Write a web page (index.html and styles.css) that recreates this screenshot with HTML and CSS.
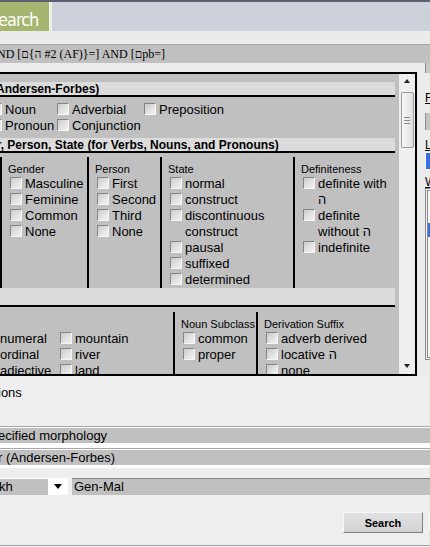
FILE: index.html
```html
<!DOCTYPE html>
<html>
<head>
<meta charset="utf-8">
<link rel="stylesheet" href="styles.css">
</head>
<body>
<div class="page">
  <div class="topline"></div>
  <div class="tabbar">
    <div class="tab"><span class="tab-text">earch</span></div>
  </div>
  <div class="band"></div>
  <div class="query">ND [ם{ה #2 (AF)}=] AND [םpb=]</div>

  <div class="work">
    <div class="panel">
      <div class="scroll">
        <div class="content">
          <div class="pad-top"></div>
          <div class="hdr h1"><span class="hdr-text">Andersen-Forbes)</span></div>
          <div class="pos">
            <div class="item"><span class="cb"></span><span class="lbl">Noun</span></div>
            <div class="item"><span class="cb"></span><span class="lbl">Adverbial</span></div>
            <div class="item"><span class="cb"></span><span class="lbl">Preposition</span></div>
            <div class="item"><span class="cb"></span><span class="lbl">Pronoun</span></div>
            <div class="item"><span class="cb"></span><span class="lbl">Conjunction</span></div>
          </div>
          <div class="hdr h2"><span class="hdr-text">er, Person, State (for Verbs, Nouns, and Pronouns)</span></div>
          <div class="grid g1">
            <div class="col w-gender">
              <div class="col-label">Gender</div>
              <div class="items">
                <div class="item"><span class="cb"></span><span class="lbl">Masculine</span></div>
                <div class="item"><span class="cb"></span><span class="lbl">Feminine</span></div>
                <div class="item"><span class="cb"></span><span class="lbl">Common</span></div>
                <div class="item"><span class="cb"></span><span class="lbl">None</span></div>
              </div>
            </div>
            <div class="col w-person">
              <div class="col-label">Person</div>
              <div class="items">
                <div class="item"><span class="cb"></span><span class="lbl">First</span></div>
                <div class="item"><span class="cb"></span><span class="lbl">Second</span></div>
                <div class="item"><span class="cb"></span><span class="lbl">Third</span></div>
                <div class="item"><span class="cb"></span><span class="lbl">None</span></div>
              </div>
            </div>
            <div class="col w-state">
              <div class="col-label">State</div>
              <div class="items">
                <div class="item"><span class="cb"></span><span class="lbl">normal</span></div>
                <div class="item"><span class="cb"></span><span class="lbl">construct</span></div>
                <div class="item"><span class="cb"></span><span class="lbl">discontinuous construct</span></div>
                <div class="item"><span class="cb"></span><span class="lbl">pausal</span></div>
                <div class="item"><span class="cb"></span><span class="lbl">suffixed</span></div>
                <div class="item"><span class="cb"></span><span class="lbl">determined</span></div>
              </div>
            </div>
            <div class="col w-def">
              <div class="col-label">Definiteness</div>
              <div class="items">
                <div class="item"><span class="cb"></span><span class="lbl">definite with ה</span></div>
                <div class="item"><span class="cb"></span><span class="lbl">definite without ה</span></div>
                <div class="item"><span class="cb"></span><span class="lbl">indefinite</span></div>
              </div>
            </div>
          </div>
          <div class="hdr h3"></div>
          <div class="grid g2">
            <div class="col c0">
              <div class="col-label"></div>
              <div class="subcols">
                <div class="items sa">
                  <div class="item"><span class="cb"></span><span class="lbl">numeral</span></div>
                  <div class="item"><span class="cb"></span><span class="lbl">ordinal</span></div>
                  <div class="item"><span class="cb"></span><span class="lbl">adjective</span></div>
                </div>
                <div class="items sb">
                  <div class="item"><span class="cb"></span><span class="lbl">mountain</span></div>
                  <div class="item"><span class="cb"></span><span class="lbl">river</span></div>
                  <div class="item"><span class="cb"></span><span class="lbl">land</span></div>
                </div>
              </div>
            </div>
            <div class="col w-noun">
              <div class="col-label">Noun Subclass</div>
              <div class="items">
                <div class="item"><span class="cb"></span><span class="lbl">common</span></div>
                <div class="item"><span class="cb"></span><span class="lbl">proper</span></div>
              </div>
            </div>
            <div class="col w-deriv">
              <div class="col-label">Derivation Suffix</div>
              <div class="items">
                <div class="item"><span class="cb"></span><span class="lbl">adverb derived</span></div>
                <div class="item"><span class="cb"></span><span class="lbl">locative ה</span></div>
                <div class="item"><span class="cb"></span><span class="lbl">none</span></div>
              </div>
            </div>
          </div>
        </div>
      </div>
      <div class="vscroll">
        <div class="sb-btn"><span class="arr-up"></span></div>
        <div class="thumb"><span class="grip"></span><span class="grip"></span><span class="grip"></span></div>
        <div class="sb-fill"></div>
        <div class="sb-btn"><span class="arr-down"></span></div>
      </div>
    </div>

    <div class="side">
      <div class="s-box1"></div>
      <div class="s-label s-f">F</div>
      <div class="s-box2"></div>
      <div class="s-label s-l">L</div>
      <div class="s-blue"></div>
      <div class="s-label s-w">W</div>
      <div class="s-list"><div class="s-sel"></div></div>
    </div>
  </div>

  <div class="lower">
    <div class="opts">ions</div>
    <div class="fold f1"><div class="fold-head">ecified morphology</div></div>
    <div class="fold f2"><div class="fold-head">r (Andersen-Forbes)</div></div>
    <div class="selrow">
      <div class="select"><span class="sel-val">kh</span><span class="sel-btn"><span class="arr-sel"></span></span></div>
      <div class="field">Gen-Mal</div>
    </div>
    <div class="btnrow">
      <button class="btn">Search</button>
      <button class="btn">Reset</button>
    </div>
    <div class="bottomline"></div>
  </div>
</div>
</body>
</html>
```
FILE: styles.css
```css
html, body {
  margin: 0;
  padding: 0;
}
body {
  background: #eeeeee;
  font-family: "Liberation Sans", Arial, sans-serif;
  color: #000;
}
.page {
  width: 430px;
  height: 547px;
  overflow: hidden;
}

/* top */
.topline {
  height: 2px;
  background: #5b6170;
}
.tabbar {
  height: 29px;
  background: #cdd1da;
  display: flex;
}
.tab {
  width: 49px;
  height: 26px;
  padding-top: 3px;
  background: #a6b56f;
  border-right: 3px solid #eef0ea;
  overflow: hidden;
  white-space: nowrap;
}
.tab-text {
  display: block;
  margin-left: -2px;
  color: #ffffff;
  font-family: "Liberation Sans Narrow", "Arial Narrow", "DejaVu Sans Condensed", sans-serif;
  font-stretch: condensed;
  font-size: 18px;
  letter-spacing: -1px;
  line-height: 29px;
}
.band {
  height: 13px;
  background: #ebebeb;
  border-bottom: 1px solid #a9a9a9;
}
.query {
  height: 18px;
  background: #c0c0c0;
  font-family: "Liberation Serif", "Times New Roman", serif;
  font-size: 12px;
  line-height: 18px;
  white-space: nowrap;
  text-indent: -3px;
  unicode-bidi: bidi-override;
  direction: ltr;
  overflow: hidden;
}

/* work area */
.work {
  display: flex;
  align-items: flex-start;
  background: #ececec;
}
.panel {
  margin-top: 9px;
  width: 415px;
  height: 300px;
  border: 2px solid #000;
  border-left: none;
  display: flex;
  flex: none;
}
.scroll {
  width: 399px;
  height: 300px;
  background: #c0c0c0;
  overflow: hidden;
  flex: none;
}
.content {
  width: 395px;
}
.pad-top {
  height: 8px;
}
.hdr {
  height: 13px;
  background: #dcdcdc;
  border-bottom: 2px solid #000;
  white-space: nowrap;
  overflow: hidden;
}
.hdr-text {
  display: block;
  font-weight: bold;
  font-size: 12px;
  line-height: 15px;
}
.h1 .hdr-text {
  margin-left: -4px;
}
.h2 .hdr-text {
  margin-left: -10px;
  line-height: 14px;
}
.h3 {
  height: 17px;
}

.item {
  display: flex;
  align-items: flex-start;
  font-size: 13px;
  line-height: 16px;
}
.cb {
  flex: none;
  width: 12px;
  height: 12px;
  box-sizing: border-box;
  margin: 1px 3px 0 0;
  border: 1px solid;
  border-color: #858585 #f6f6f6 #f6f6f6 #858585;
  background: linear-gradient(135deg, #cacaca 0%, #e4e4e4 60%, #f2f2f2 100%);
}
.lbl {
  white-space: normal;
}

.pos {
  display: grid;
  grid-template-columns: 67px 87px auto;
  grid-auto-rows: 16px;
  margin-left: -10px;
  padding: 5px 0 4px;
}
.pos .item {
  white-space: nowrap;
}

.grid {
  display: flex;
}
.g1 {
  padding-top: 4px;
  height: 131px;
}
.g2 {
  padding-top: 5px;
  height: 80px;
}
.col {
  flex: none;
  box-sizing: border-box;
  border-left: 2px solid #000;
  padding: 5px 0 0 6px;
}
.col-label {
  height: 14px;
  font-size: 11px;
  line-height: 14px;
  white-space: nowrap;
}
.items {
  padding-left: 2px;
}
.w-gender { width: 87px; }
.w-person { width: 73px; }
.w-state  { width: 133px; }
.w-def    { width: 102px; }

.c0 {
  width: 188px;
  margin-left: -15px;
  border-left: none;
  padding-left: 0;
}
.subcols {
  display: flex;
}
.c0 .items {
  padding-left: 0;
}
.sa { width: 75px; }
.w-noun { width: 83px; }
.w-deriv { width: 139px; }

/* scrollbar */
.vscroll {
  width: 16px;
  flex: none;
  background: #efefef;
  display: flex;
  flex-direction: column;
  align-items: center;
}
.sb-btn {
  height: 16px;
  width: 16px;
  display: flex;
  align-items: center;
  justify-content: center;
  flex: none;
}
.arr-up {
  width: 0;
  height: 0;
  border-left: 3px solid transparent;
  border-right: 3px solid transparent;
  border-bottom: 4px solid #222;
  margin-top: -3px;
}
.arr-down {
  width: 0;
  height: 0;
  border-left: 3px solid transparent;
  border-right: 3px solid transparent;
  border-top: 4px solid #222;
}
.thumb {
  margin-top: 2px;
  width: 13px;
  height: 56px;
  box-sizing: border-box;
  border: 1px solid #9c9c9c;
  border-radius: 2px;
  background: linear-gradient(to right, #f8f8f8, #dedede);
  display: flex;
  flex-direction: column;
  align-items: center;
  justify-content: center;
  gap: 2px;
  flex: none;
}
.grip {
  display: block;
  width: 6px;
  height: 1px;
  background: #8a8a8a;
}
.sb-fill {
  flex: 1;
}

/* side column */
.side {
  flex: 1;
  padding-left: 8px;
  display: flex;
  flex-direction: column;
  font-size: 12px;
}
.s-box1 {
  height: 10px;
  flex: none;
  background: #c8c8c8;
  border-left: 1px solid #8c8c8c;
}
.s-label {
  height: 13px;
  flex: none;
  line-height: 14px;
  text-decoration: underline;
  white-space: nowrap;
  overflow: hidden;
}
.s-f { margin-top: 18px; }
.s-box2 {
  margin-top: 9px;
  height: 17px;
  flex: none;
  background: #c4c4c4;
  border-left: 1px solid #8c8c8c;
}
.s-l { margin-top: 8px; }
.s-blue {
  margin-top: 1px;
  height: 16px;
  flex: none;
  border: 1px solid #f4f4f4;
  background: #3a6fe0;
}
.s-w { margin-top: 5px; }
.s-list {
  height: 134px;
  flex: none;
  border: 3px double #8a8a8a;
  background: #f4f4f4;
  padding-top: 32px;
}
.s-sel {
  height: 14px;
  background: #3a6fe0;
}

/* lower area */
.lower {
  display: flex;
  flex-direction: column;
}
.opts {
  margin-top: 9px;
  height: 16px;
  font-size: 13px;
  line-height: 16px;
  text-indent: -2px;
}
.fold {
  border-top: 1px solid #a6a6a6;
  background: #ffffff;
  padding-top: 1px;
}
.f1 {
  margin-top: 25px;
  padding-bottom: 5px;
}
.f2 {
  padding-bottom: 3px;
}
.fold-head {
  height: 15px;
  background: #c0c0c0;
  font-size: 13px;
  line-height: 15px;
  white-space: nowrap;
  text-indent: -2px;
}
.selrow {
  margin-top: 10px;
  height: 17px;
  display: flex;
}
.select {
  width: 68px;
  display: flex;
  background: #ffffff;
  flex: none;
}
.sel-val {
  width: 48px;
  margin-top: 1px;
  height: 16px;
  background: #c0c0c0;
  font-size: 13px;
  line-height: 16px;
  text-indent: -1px;
}
.sel-btn {
  flex: 1;
  display: flex;
  align-items: center;
  justify-content: center;
}
.arr-sel {
  width: 0;
  height: 0;
  border-left: 4px solid transparent;
  border-right: 4px solid transparent;
  border-top: 5px solid #000;
}
.field {
  margin-left: 4px;
  flex: 1;
  box-sizing: border-box;
  border-top: 1px solid #858585;
  background: #c0c0c0;
  font-size: 13px;
  line-height: 16px;
  padding-left: 2px;
}
.btnrow {
  margin-top: 17px;
  display: flex;
  gap: 6px;
  padding-left: 343px;
}
.btn {
  flex: none;
  width: 80px;
  height: 21px;
  margin: 0;
  padding: 0;
  box-sizing: border-box;
  border: 1px solid;
  border-color: #f8f8f8 #7e7e7e #7e7e7e #f8f8f8;
  background: linear-gradient(#e2e2e2, #d2d2d2);
  font-family: "Liberation Sans", Arial, sans-serif;
  font-weight: bold;
  font-size: 11px;
  color: #000;
}
.bottomline {
  margin-top: 12px;
  height: 1px;
  background: #a4a4a4;
}
```
